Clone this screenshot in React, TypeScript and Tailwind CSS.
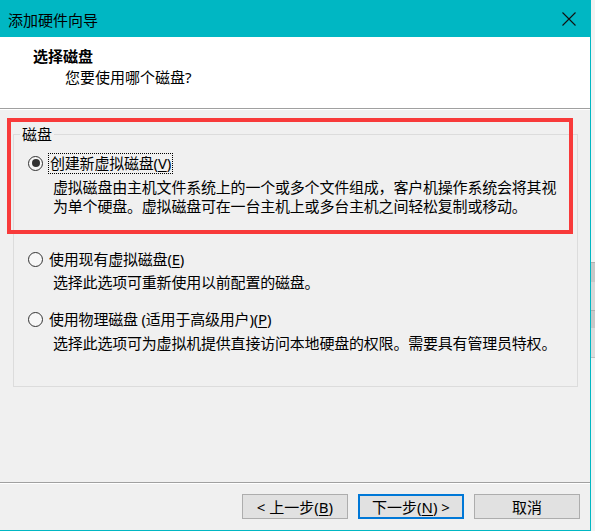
import React from "react";

function Radio({ checked }: { checked?: boolean }) {
  return (
    <span className="flex h-[15px] w-[15px] shrink-0 items-center justify-center rounded-full border border-[#333333] bg-[#f7f7f7]">
      {checked && <span className="h-[8px] w-[8px] rounded-full bg-[#333333]" />}
    </span>
  );
}

export default function App() {
  return (
    <div className="flex h-[531px] w-[595px] bg-[#f0f0f0] font-['Noto_Sans','Noto_Sans_CJK_SC',sans-serif] text-[15px] text-black">
      <div className="relative flex h-[531px] w-[591px] flex-col border-b border-r border-[#00b7c3]">
        {/* Title bar */}
        <div className="flex h-[37px] shrink-0 items-center justify-between bg-[#00b7c3] pl-[8px] pr-[14px]">
          <span className="pt-[2px] leading-5">添加硬件向导</span>
          <svg width="14" height="14" viewBox="0 0 14 14" className="mt-[1px]">
            <path d="M0.5 0.5 L13.5 13.5 M13.5 0.5 L0.5 13.5" stroke="#111" strokeWidth="1.1" fill="none" />
          </svg>
        </div>
        {/* Header */}
        <div className="h-[72px] shrink-0 border-b border-[#a0a0a0] bg-white pt-[9px]">
          <div className="pl-[33px] font-bold leading-5">选择磁盘</div>
          <div className="mt-[1px] pl-[65px] leading-5">您要使用哪个磁盘?</div>
        </div>
        <div className="h-px shrink-0 bg-white" />
        {/* Body */}
        <div className="flex-1">
          <fieldset className="ml-[13px] mr-[12px] mt-[14px] border border-[#dcdcdc] pb-[33px]">
            <legend className="ml-[6px] px-[2px] leading-5">磁盘</legend>
            <div className="mt-[9px] pl-[14px] tracking-[-0.2px]">
              <div className="flex h-[20px] items-center">
                <Radio checked />
                <span className="ml-[5px] flex h-[21px] items-center border border-dotted border-black px-[1px] leading-5">
                  创建新虚拟磁盘(<span className="underline underline-offset-2">V</span>)
                </span>
              </div>
              <div className="mt-[5px] pl-[25px] leading-[19px]">
                虚拟磁盘由主机文件系统上的一个或多个文件组成，客户机操作系统会将其视
                <br />
                为单个硬盘。虚拟磁盘可在一台主机上或多台主机之间轻松复制或移动。
              </div>
              <div className="mt-[33px] flex h-[20px] items-center">
                <Radio />
                <span className="ml-[6px] leading-5">
                  使用现有虚拟磁盘(<span className="underline underline-offset-2">E</span>)
                </span>
              </div>
              <div className="mt-[4px] pl-[25px] leading-[19px]">选择此选项可重新使用以前配置的磁盘。</div>
              <div className="mt-[17px] flex h-[20px] items-center">
                <Radio />
                <span className="ml-[6px] leading-5">
                  使用物理磁盘 (适用于高级用户)(<span className="underline underline-offset-2">P</span>)
                </span>
              </div>
              <div className="mt-[5px] pl-[25px] leading-[19px]">
                选择此选项可为虚拟机提供直接访问本地硬盘的权限。需要具有管理员特权。
              </div>
            </div>
          </fieldset>
        </div>
        <div className="h-px shrink-0 bg-[#a0a0a0]" />
        <div className="h-px shrink-0 bg-white" />
        {/* Footer */}
        <div className="flex h-[46px] shrink-0 justify-end gap-[10px] pr-[10px] pt-[10px]">
          <button className="flex h-[25px] w-[106px] items-center justify-center border border-[#adadad] bg-[#e1e1e1] leading-5">
            &lt; 上一步(<span className="underline underline-offset-2">B</span>)
          </button>
          <button className="flex h-[25px] w-[106px] items-center justify-center border-2 border-[#0078d7] bg-[#e1e1e1] leading-5">
            下一步(<span className="underline underline-offset-2">N</span>) &gt;
          </button>
          <button className="flex h-[25px] w-[106px] items-center justify-center border border-[#adadad] bg-[#e1e1e1] leading-5">
            取消
          </button>
        </div>
        {/* Red highlight box */}
        <div className="absolute left-[7px] top-[118px] h-[116px] w-[566px] border-4 border-[#f83a3a]" />
      </div>
      {/* Outside strip */}
      <div className="flex w-[4px] flex-col bg-[#f2f2f2]">
        <div className="h-[262px]" />
        <div className="h-[20px] border-t border-[#b0b0b0] bg-[#c8c8c8]" />
        <div className="h-[28px] bg-[#d8d8d8]" />
        <div className="h-[18px] border-t border-[#b0b0b0] bg-[#c8c8c8]" />
        <div className="h-[29px] bg-[#dcdcdc]" />
        <div className="flex-1 border-t border-[#c0c0c0]" />
      </div>
    </div>
  );
}
